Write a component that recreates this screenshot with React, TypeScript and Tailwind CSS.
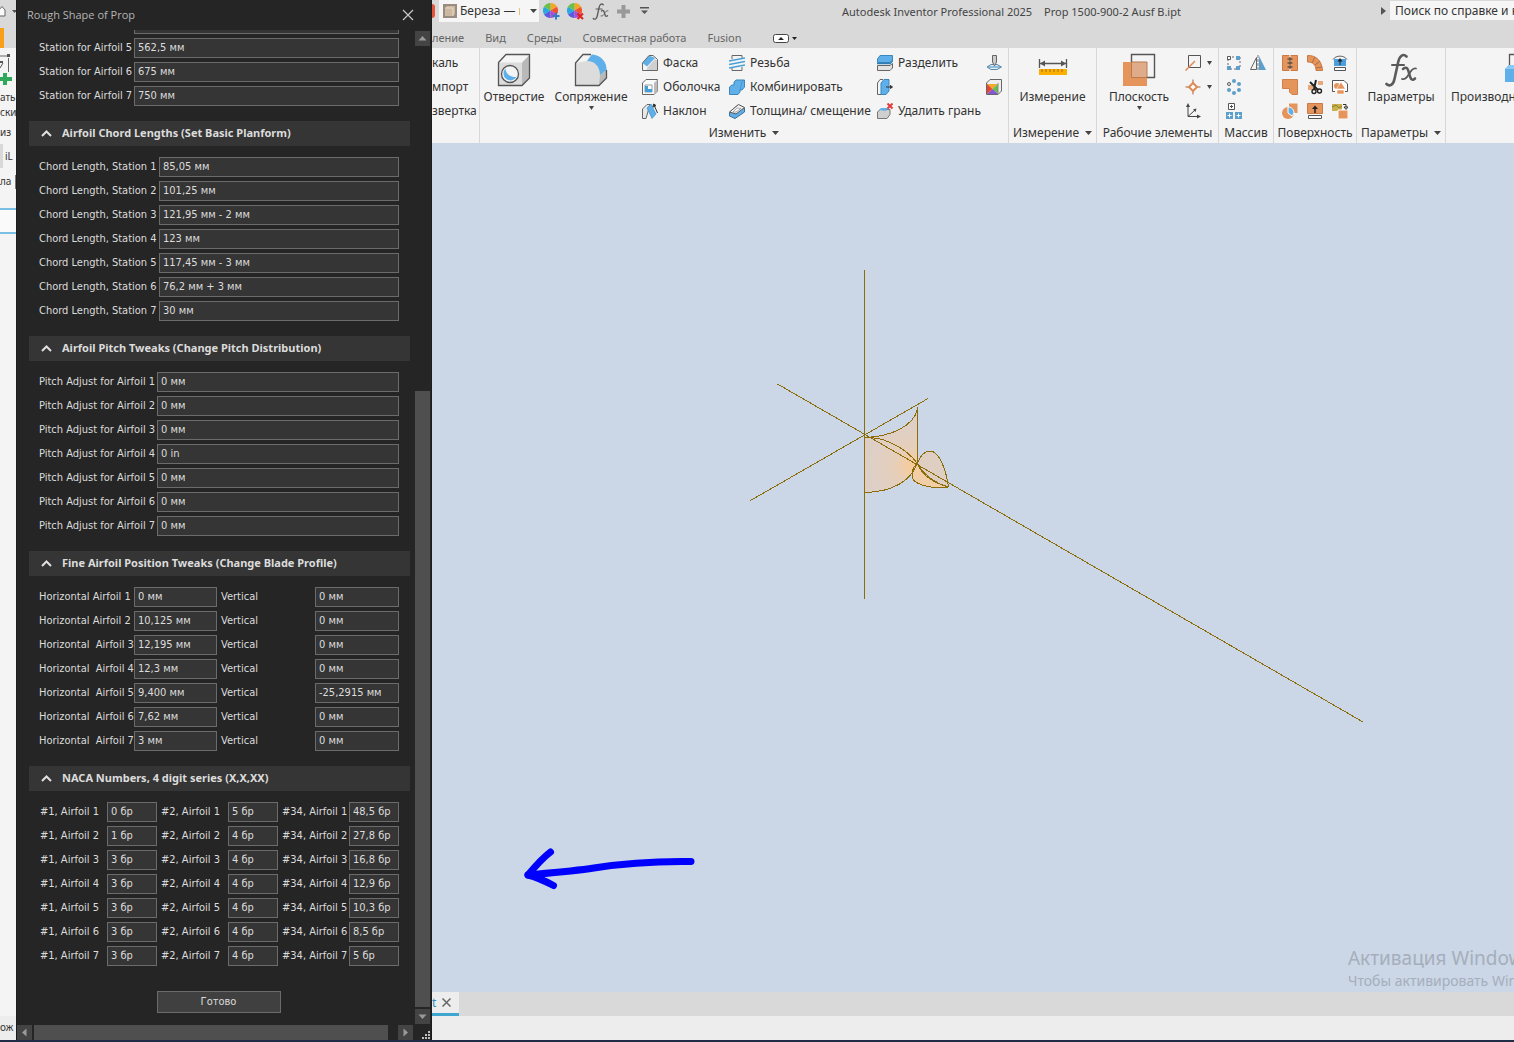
import React from 'react';

type Field = { label: string; value: string };

const stations: Field[] = [
    { label: '', value: '' },
    { label: 'Station for Airfoil 5', value: '562,5 мм' },
    { label: 'Station for Airfoil 6', value: '675 мм' },
    { label: 'Station for Airfoil 7', value: '750 мм' },
];

const chords: Field[] = ['85,05 мм', '101,25 мм', '121,95 мм - 2 мм', '123 мм', '117,45 мм - 3 мм', '76,2 мм + 3 мм', '30 мм'].map(
    (value, i) => ({ label: `Chord Length, Station ${i + 1}`, value })
);

const pitches: Field[] = ['0 мм', '0 мм', '0 мм', '0 in', '0 мм', '0 мм', '0 мм'].map((value, i) => ({
    label: `Pitch Adjust for Airfoil ${i + 1}`,
    value,
}));

const positions: Field[] = [
    ['Horizontal Airfoil 1', '0 мм', '0 мм'],
    ['Horizontal Airfoil 2', '10,125 мм', '0 мм'],
    ['Horizontal  Airfoil 3', '12,195 мм', '0 мм'],
    ['Horizontal  Airfoil 4', '12,3 мм', '0 мм'],
    ['Horizontal  Airfoil 5', '9,400 мм', '-25,2915 мм'],
    ['Horizontal  Airfoil 6', '7,62 мм', '0 мм'],
    ['Horizontal  Airfoil 7', '3 мм', '0 мм'],
].flatMap(([label, h, v]) => [
    { label, value: h },
    { label: 'Vertical', value: v },
]);

const naca: Field[] = [
    ['0 бр', '5 бр', '48,5 бр'],
    ['1 бр', '4 бр', '27,8 бр'],
    ['3 бр', '4 бр', '16,8 бр'],
    ['3 бр', '4 бр', '12,9 бр'],
    ['3 бр', '4 бр', '10,3 бр'],
    ['3 бр', '4 бр', '8,5 бр'],
    ['3 бр', '4 бр', '5 бр'],
].flatMap(([a, b, c], i) => [
    { label: `#1, Airfoil ${i + 1}`, value: a },
    { label: `#2, Airfoil ${i + 1}`, value: b },
    { label: `#34, Airfoil ${i + 1}`, value: c },
]);

function Fields({ name, items, cols }: { name: string; items: Field[]; cols: string }) {
    return (
        <div className={`grid items-center gap-y-1 pl-[10px] pr-[11px] ${cols}`}>
            {items.map((item, i) => (
                <React.Fragment key={i}>
                    <label htmlFor={`${name}-${i}`} className="whitespace-pre">
                        {item.label}
                    </label>
                    <input
                        id={`${name}-${i}`}
                        defaultValue={item.value}
                        className="h-5 w-full min-w-0 border border-[#6b6b6b] bg-[#353535] px-[3px] pb-px outline-none"
                    />
                </React.Fragment>
            ))}
        </div>
    );
}

function SectionHeader({ children }: { children: React.ReactNode }) {
    return (
        <button className="mt-[15px] mb-[11px] flex h-[25px] w-full items-center gap-[10px] bg-[#353535] pl-3 text-left font-['Noto_Sans',sans-serif] font-bold">
            <svg width="11" height="7" viewBox="0 0 11 7" fill="none" stroke="#e0e0e0" strokeWidth="2">
                <path d="M1 6 5.5 1.5 10 6" />
            </svg>
            {children}
        </button>
    );
}

function ScrollArrow({ label, path }: { label: string; path: string }) {
    return (
        <button aria-label={label} className="size-[15px] shrink-0 bg-[#444]">
            <svg width="15" height="15" viewBox="0 0 15 15" fill="#9a9a9a">
                <path d={path} />
            </svg>
        </button>
    );
}

function PropDialog() {
    return (
        <div className="flex w-[416px] shrink-0 flex-col border-x border-[#1b1b1b] bg-[#252525] font-['DejaVu_Sans_Condensed','Liberation_Sans',sans-serif] text-[11px] text-[#dcdcdc]">
            <div className="flex h-[30px] shrink-0 items-center justify-between pr-[17px] pl-[10px] text-[#b4b4b4]">
                <h1 className="font-['Open_Sans',sans-serif] text-[11px]">Rough Shape of Prop</h1>
                <button aria-label="Закрыть">
                    <svg width="12" height="12" viewBox="0 0 12 12" stroke="#c8c8c8" strokeWidth="1.2">
                        <path d="M1 1 11 11M11 1 1 11" />
                    </svg>
                </button>
            </div>
            <div className="flex min-h-0 flex-1">
                <div className="min-w-0 flex-1 overflow-hidden pr-[5px] pl-3">
                    <div className="-mt-4">
                        <Fields name="station" items={stations} cols="grid-cols-[95px_1fr]" />
                        <SectionHeader>Airfoil Chord Lengths (Set Basic Planform)</SectionHeader>
                        <Fields name="chord" items={chords} cols="grid-cols-[120px_1fr]" />
                        <SectionHeader>Airfoil Pitch Tweaks (Change Pitch Distribution)</SectionHeader>
                        <Fields name="pitch" items={pitches} cols="grid-cols-[118px_1fr]" />
                        <SectionHeader>Fine Airfoil Position Tweaks (Change Blade Profile)</SectionHeader>
                        <Fields name="position" items={positions} cols="grid-cols-[95px_83px_98px_84px] [&>label:nth-of-type(even)]:pl-1" />
                        <SectionHeader>NACA Numbers, 4 digit series (X,X,XX)</SectionHeader>
                        <Fields name="naca" items={naca} cols="grid-cols-[68px_50px_71px_50px_71px_50px] [&>label]:pl-1 [&>label:nth-of-type(3n+1)]:pl-px" />
                        <div className="flex justify-center pt-[25px] pr-0.5">
                            <button className="h-[22px] w-[124px] border border-[#6b6b6b] bg-[#404040]">Готово</button>
                        </div>
                    </div>
                </div>
                <div className="flex w-4 shrink-0 flex-col items-start pt-px">
                    <ScrollArrow label="Вверх" path="M3.5 9.5 7.5 5l4 4.5z" />
                    <div className="flex w-[15px] flex-1 flex-col justify-end py-0.5">
                        <div className="h-9/14 bg-[#4f4f4f]" />
                    </div>
                    <ScrollArrow label="Вниз" path="M3.5 5.5 7.5 10l4-4.5z" />
                </div>
            </div>
            <div className="flex h-4 shrink-0 items-end pt-px">
                <ScrollArrow label="Влево" path="M9.5 3.5 5 7.5l4.5 4z" />
                <div className="mx-0.5 h-[15px] flex-1 bg-[#4f4f4f]" />
                <div className="w-2" />
                <ScrollArrow label="Вправо" path="M5.5 3.5 10 7.5l-4.5 4z" />
                <svg className="ml-2" width="10" height="10" viewBox="0 0 10 10" fill="#bdbdbd">
                    <path d="M7 1h2v2H7zM4 4h2v2H4zM7 4h2v2H7zM1 7h2v2H1zM4 7h2v2H4zM7 7h2v2H7z" />
                </svg>
            </div>
        </div>
    );
}

// Slice of the Inventor window that shows to the left of the dialog
function LeftEdge() {
    return (
        <div className="flex w-4 shrink-0 flex-col overflow-hidden bg-[#f4f4f4] text-[#333]">
            <div className="h-7 bg-[#d9d9d9]">
                <svg width="16" height="28" viewBox="0 0 16 28">
                    <path d="M-2 11 2 6.5 5 10v6H-2" fill="#fafafa" stroke="#666" />
                    <path d="M12 10h5l-2.500 3z" fill="#555" />
                </svg>
            </div>
            <div className="flex h-5 bg-[#d9d9d9]">
                <div className="w-1 bg-[#f9a01b]" />
            </div>
            <svg className="shrink-0" width="16" height="40" viewBox="0 0 16 40">
                <path d="M0 8h7M8.500 10v14" stroke="#666" fill="none" />
                <path d="M7 6h3v3H7zM0 13h3v2H0z" fill="#555" />
                <path d="M0 20 3 15" stroke="#555" />
                <path d="M3 25h4v4h5v4H7v4H3v-4H-2v-4h5z" fill="#2fa85a" />
            </svg>
            <div className="flex h-14 flex-col text-[10px] leading-[15px]">
                <span className="mt-0.5">ать</span>
                <span>ски</span>
                <span className="mt-[5px]">из</span>
            </div>
            <div className="flex h-6 bg-[#f4f4f4] text-[10px] leading-6">
                <div className="w-[3px] shrink-0 bg-[#d9d9d9]" />
                <span className="ml-0.5">iL</span>
            </div>
            <div className="flex h-7 items-center justify-between text-[10px]">
                <span>ла</span>
                <span className="h-3.5 w-px shrink-0 bg-[#777]" />
            </div>
            <div className="mt-3 h-[26px] shrink-0 border-y-2 border-[#79bfe3] bg-[#fafafa]" />
            <div className="flex-1" />
            <div className="flex h-6 items-center bg-[#ededed] text-[10px]">ож</div>
        </div>
    );
}

function Svg({ size = 16, children }: { size?: number; children: React.ReactNode }) {
    return (
        <svg className="shrink-0" width={size} height={size} viewBox={`0 0 ${size} ${size}`} fill="none">
            {children}
        </svg>
    );
}

function Caret({ size = 7 }: { size?: number }) {
    return (
        <svg className="shrink-0" width={size} height="4" viewBox="0 0 8 4" preserveAspectRatio="none" fill="#444">
            <path d="M0 0h8L4 4z" />
        </svg>
    );
}

const HoleIcon = () => (
    <Svg size={34}>
        <path d="M1.500 9.500 9 1.500h24L25 9.500z" fill="#f5f5f5" />
        <path d="m25 9.500 8-8V25l-8 8z" fill="#b9b9b9" />
        <path d="M1.500 9.500H25V33H1.500z" fill="#dcdcdc" />
        <path d="M1.500 9.500 9 1.500h23.500V25L25 32.500H1.500z" stroke="#555" strokeWidth="1.300" />
        <circle cx="13" cy="21" r="8.500" fill="#f4f4f4" stroke="#555" strokeWidth="1.300" />
        <path d="M8.500 15.500a7 7 0 1 0 11 8.500C14 24.500 8.500 21 8.500 15.500z" fill="#5fb0ea" />
    </Svg>
);

const FilletIcon = () => (
    <Svg size={34}>
        <path d="M1.500 10 9 1.500h8C27 2 32 9 32.500 17v8L25 32.500H1.500z" fill="#dcdcdc" />
        <path d="M1.500 10 9 1.500h8L13 8z" fill="#f5f5f5" />
        <path d="m26 22 6.500-5v8L25 32.500z" fill="#b9b9b9" />
        <path d="M13 8 18 1.500C27 2 33 9 32.500 17L26 22C26 14 21 8 13 8z" fill="#5fb0ea" />
        <path d="M17 1.500H9L1.500 10v22.500H25l7.500-7.500v-8" stroke="#555" strokeWidth="1.300" />
    </Svg>
);

const ChamferIcon = () => (
    <Svg>
        <path d="M5 13 13 4l2.500 2v9.500H5z" fill="#d0d0d0" />
        <path d="M.5 8 7 .5l6 2.500-8 8.500z" fill="#5fb0ea" />
        <path d="M.5 15.500V8L7 .5h4l4.500 4v11z" stroke="#666" />
    </Svg>
);

const ShellIcon = () => (
    <Svg>
        <path d="M.5 4 4 .5h11.500V12L12 15.500H.5z" fill="#fafafa" stroke="#666" />
        <path d="m12 4 3.500-3.500V12L12 15.500z" fill="#bbb" />
        <path d="M3 6h7v7H3z" fill="#fff" stroke="#999" />
        <path d="M3 7h3v3h4v3H3z" fill="#3fa0dd" />
    </Svg>
);

const DraftIcon = () => (
    <Svg>
        <path d="M.5 15.500V6L5 1.500h3L4 15.500z" fill="#e8e8e8" stroke="#666" />
        <path d="M5 5 9 1l5 10-4 4.500z" fill="#5fb0ea" stroke="#3b87ba" strokeWidth=".6" />
        <path d="m15.500 10-3-7M11 4l.5-3L14 2.500z" stroke="#333" fill="#333" />
    </Svg>
);

const ThreadIcon = () => (
    <Svg>
        <path d="M3 4V.5h10V3M3 12v3.500h10V12" stroke="#666" />
        <path d="m0 6 16-3M0 9.500l16-3M0 13l16-3" stroke="#4a9fd8" strokeWidth="1.700" />
    </Svg>
);

const CombineIcon = () => (
    <Svg>
        <path d="M5 3 7 1h8.500v7L13 11h-2v2l-2 2.500H.5V8L3 6h2z" fill="#5fb0ea" stroke="#3b87ba" />
        <path d="m13 3 2-2M11 11l2-8" stroke="#3583b8" strokeWidth=".6" />
    </Svg>
);

const ThickenIcon = () => (
    <Svg>
        <path d="M.5 9.500 9 2l6.500 3v4L6 15.500.5 13z" fill="#5fb0ea" stroke="#3b6f94" />
        <path d="m.5 9 9-7.500 6 3L7 11z" fill="#f2f2f2" stroke="#555" />
        <path d="m4 9 4-4 4 .5L7 9z" fill="#fff" stroke="#888" strokeWidth=".7" />
    </Svg>
);

const SplitIcon = () => (
    <Svg>
        <path d="M.5 4 3 .5h12.500V5L13 7.500H.5z" fill="#5fb0ea" stroke="#3b87ba" />
        <path d="M0 8.500h13l3-3" stroke="#2f7db5" strokeWidth="1.500" />
        <path d="M.5 10.500h12.500l2.500-2V13L13 15.500H.5z" fill="#e3e3e3" stroke="#666" />
    </Svg>
);

const DirectIcon = () => (
    <Svg>
        <path d="M4 15.500H.5V4L3 .5h3" stroke="#666" />
        <path d="M4 4 7 .5h5V12l-3 3.500H4z" fill="#5fb0ea" stroke="#3b87ba" />
        <path d="M9 8h5M13.500 6.500 15.500 8l-2 1.500z" stroke="#333" fill="#333" />
    </Svg>
);

const DeleteFaceIcon = () => (
    <Svg>
        <path d="M.5 9 3 6.500h10v5L10 15.500H.5z" fill="#cfcfcf" stroke="#777" />
        <path d="M2 7 4 5h7l-2 3z" fill="#5fb0ea" />
        <path d="m10.500.5 5 5m0-5-5 5" stroke="#e23b3b" strokeWidth="2" />
    </Svg>
);

const StampIcon = () => (
    <Svg>
        <path d="M1 12 5 9.500h6L15.500 12 11 14.500H5z" fill="#e8f2fa" stroke="#5a86a8" />
        <path d="M6.500.5h4V7l-2 4-2-4z" fill="#ccc" stroke="#666" />
        <path d="M2 12h12" stroke="#3b87ba" />
    </Svg>
);

const ColorBoxIcon = () => (
    <Svg>
        <path d="M.5 4 4 .5h11.500V12L12 15.500H.5z" fill="#eee" stroke="#666" />
        <path d="M1 5h11L6.500 10z" fill="#f1a92e" />
        <path d="M12 5v10L6.500 10z" fill="#63bf46" />
        <path d="M1 15h11l-5.500-5z" fill="#8455d6" />
        <path d="M1 5v10l5.500-5z" fill="#e8452f" />
        <path d="M12 4v11.500" stroke="#888" />
    </Svg>
);

const RulerIcon = () => (
    <Svg size={30}>
        <path d="M1.500 4v9M28.500 4v9M2 8.500h26" stroke="#555" strokeWidth="1.300" />
        <path d="m2 8.500 5-3v6zM28 8.500l-5-3v6z" fill="#555" />
        <path d="M1 14h28v6H1z" fill="#fbb000" />
        <path d="M4 14v3m4-3v3m4-3v3m4-3v3m4-3v3m4-3v3" stroke="#a56d00" />
    </Svg>
);

const PlaneIcon = () => (
    <Svg size={34}>
        <path d="M9.500 1.500h23v23h-23z" fill="#f4f4f4" stroke="#555" strokeWidth="1.400" />
        <path d="M1 9h24v24H1z" fill="#e5945c" />
        <path d="M9.500 9H25v15.500H9.500z" fill="#e0ab89" stroke="#b87b50" />
    </Svg>
);

const AxisIcon = () => (
    <Svg>
        <path d="M3.500.5h12v12h-12z" stroke="#555" />
        <path d="M.5 15.500 10 6" stroke="#df8a55" strokeWidth="1.500" />
    </Svg>
);

const PointIcon = () => (
    <Svg>
        <path d="M8 .5v4M8 11.500v4M.5 8h4M11.500 8h4" stroke="#a2663d" />
        <path d="m8 4 4 4-4 4-4-4z" fill="#fff" stroke="#e08a52" strokeWidth="2" />
    </Svg>
);

const UcsIcon = () => (
    <Svg>
        <path d="M3 2v11.500h11M3 13.500 10 7" stroke="#444" />
        <path d="m3 0 2 4H1zM16 13.500l-4 2v-4zM11.500 5.500 10.500 9 8 6.500z" fill="#444" />
    </Svg>
);

const RectPatternIcon = () => (
    <Svg>
        <path d="M2 2h12v12H2z" stroke="#666" strokeDasharray="2 2" />
        <path d="M1.500 1.500h3v3h-3z" fill="#fff" stroke="#555" />
        <path d="M10 1h4v4h-4zM1 11h4v4H1zM10 11h4v4h-4z" fill="#5b9fca" />
    </Svg>
);

const CircPatternIcon = () => (
    <Svg>
        <circle cx="3" cy="5" r="1.500" stroke="#555" />
        <g fill="#5b9fca">
            <circle cx="8" cy="2" r="2" />
            <circle cx="13" cy="5" r="2" />
            <circle cx="13" cy="11" r="2" />
            <circle cx="8" cy="14" r="2" />
            <circle cx="3" cy="11" r="2" />
        </g>
    </Svg>
);

const SketchPatternIcon = () => (
    <Svg>
        <path d="M2.500.5h6v6h-6z" fill="#fff" stroke="#555" />
        <path d="M5.500 2v3M4 3.500h3" stroke="#555" />
        <path d="M0 9h7v7H0zM9 9h7v7H9z" fill="#5b9fca" />
        <path d="M3.500 10.500v4M1.500 12.500h4M12.500 10.500v4M10.500 12.500h4" stroke="#fff" />
    </Svg>
);

const MirrorIcon = () => (
    <Svg>
        <path d="M6.500 2.500v12h-6z" stroke="#666" />
        <path d="M9 1v14h7z" fill="#5b9fca" />
        <path d="M8 0v16" stroke="#777" strokeDasharray="3 1" />
    </Svg>
);

const surfaceIcons: React.ReactNode[] = [
    <Svg>
        <path d="M.5.5h15v15H.5z" fill="#e5945c" stroke="#c97a45" />
        <path d="M8 0v16" stroke="#fff" />
        <path d="M8 2v12M5.500 4h5M5.500 8h5M5.500 12h5" stroke="#333" />
    </Svg>,
    <Svg>
        <path d="M.5.5C9 0 15 6 15.500 15.500H9C9 10 6 7 .5 7z" fill="#e5945c" stroke="#c97a45" />
        <path d="M5 8 8 2M8 10l5-4M9 13l6-1" stroke="#b06a3b" />
    </Svg>,
    <Svg>
        <path d="M1 4.500C4 0 12 0 15 4.500" stroke="#666" />
        <path d="M2 4h12v7H2z" fill="#4a9fdc" />
        <path d="M8 10V5" stroke="#222" />
        <path d="M8 3 5.500 6.500h5z" fill="#222" />
        <path d="M2.500 12.500h11v3h-11z" fill="#fff" stroke="#555" />
    </Svg>,
    <Svg>
        <path d="M.5.5h15v15H10L7.500 13V9.500H.5z" fill="#e5945c" stroke="#d07f49" />
    </Svg>,
    <Svg>
        <path d="M1 6h5v5H1zM11 2h5v4h-5z" fill="#e9a77c" />
        <path d="m3 3 8 8M9 1 7 10" stroke="#222" strokeWidth="2" />
        <circle cx="7" cy="12.500" r="2" stroke="#222" strokeWidth="1.400" />
        <circle cx="12.500" cy="12" r="2" stroke="#222" strokeWidth="1.400" />
    </Svg>,
    <Svg>
        <path d="M3 12.500H.5v-11H12L15.500 5v7.500H13" fill="#fff" stroke="#555" />
        <circle cx="5" cy="7" r="3" fill="#e5945c" />
        <path d="m9 3 4.500 7H4.500zM5 11h7v4H5z" fill="#e5945c" stroke="#fff" strokeWidth=".6" />
    </Svg>,
    <Svg>
        <path d="M7 .5h8.500V10H7z" fill="#e5945c" />
        <circle cx="6" cy="10" r="6" fill="#e5945c" />
        <path d="M6 4c4 0 6 3 6 6l-2 3-4-3z" fill="#5fb0ea" stroke="#fff" />
    </Svg>,
    <Svg>
        <path d="M.5.500h15v10H.5z" fill="#e5945c" stroke="#c97a45" />
        <path d="M8 10V5" stroke="#222" strokeWidth="1.500" />
        <path d="M8 2.500 5 6h6z" fill="#222" />
        <path d="M1.500 12.500h13v3h-13z" fill="#fff" stroke="#555" />
    </Svg>,
    <Svg>
        <path d="M0 1h10v7H0z" fill="#c9b04a" />
        <path d="m0 4 4-2 3 3 3-2" stroke="#8d7c32" />
        <path d="M6 7h10v9H6z" fill="#e5945c" stroke="#fff" />
        <path d="M11 1.500h3V4M12 4h4l-2 2.500z" stroke="#333" />
    </Svg>,
];

const DeriveIcon = () => (
    <Svg size={34}>
        <path d="M5.500 14V1.500H30V20" stroke="#555" strokeWidth="1.300" />
        <path d="M1 16 5 12h22v17H1z" fill="#5fb0ea" />
        <path d="m1 16 4-4h22l-3 4z" fill="#8ccaf5" />
    </Svg>
);

function ColorWheel({ remove }: { remove?: boolean }) {
    return (
        <svg width="17" height="17" viewBox="0 0 17 17" fill="none">
            <path d="M7.500 7.500V0A7.500 7.500 0 0 1 14 3.700z" fill="#f6a623" />
            <path d="M7.500 7.500 14 3.700a7.500 7.500 0 0 1 0 7.500z" fill="#f0542d" />
            <path d="M7.500 7.500 14 11.200A7.500 7.500 0 0 1 7.500 15z" fill="#b44ad0" />
            <path d="M7.500 7.500V15A7.500 7.500 0 0 1 1 11.200z" fill="#5a5be0" />
            <path d="M7.500 7.500 1 11.200a7.500 7.500 0 0 1 0-7.500z" fill="#29a9e0" />
            <path d="M7.500 7.500 1 3.700A7.500 7.500 0 0 1 7.500 0z" fill="#6cc04a" />
            {remove ? (
                <path d="m10.500 10.500 5.500 5.500m0-5.500L10.500 16" stroke="#e02020" strokeWidth="2" />
            ) : (
                <path d="M13 9.500v7M9.500 13h7" stroke="#2f7dc4" strokeWidth="2" />
            )}
        </svg>
    );
}

function FxIcon({ size = 34 }: { size?: number }) {
    return (
        <svg width={size} height={size} viewBox="0 0 34 34" fill="none" stroke="#5a5a5a" strokeLinecap="round">
            <path d="M22.500 3.500C19 0 15.500 3 14.200 9L10.500 26c-1.200 6-5 8-8 5" strokeWidth="2.600" />
            <path d="M8 12h12" strokeWidth="2" />
            <path d="M19 16c4-3 5 0 6 4s2 9 6 5.500" strokeWidth="2.600" />
            <path d="M32 15.500c-3-1-5 2-7 5.500s-4 6-7 5" strokeWidth="1.800" />
        </svg>
    );
}

function Group({ width, label, caret, children }: { width: string; label: string; caret?: boolean; children?: React.ReactNode }) {
    return (
        <section className={`flex shrink-0 flex-col border-r border-[#d8d8d8] ${width}`}>
            <div className="flex h-[75px] pt-[3px]">{children}</div>
            <div className="flex h-5 items-center justify-center gap-1.5 whitespace-nowrap">
                {label}
                {caret && <Caret />}
            </div>
        </section>
    );
}

function BigButton({ icon, label, caret, width }: { icon: React.ReactNode; label: string; caret?: boolean; width: string }) {
    return (
        <button className={`flex flex-col items-center self-start whitespace-nowrap ${width}`}>
            <span className="flex h-[37px] items-center">{icon}</span>
            <span className="leading-[18px]">{label}</span>
            {caret && <Caret size={5} />}
        </button>
    );
}

function ToolColumn({ width, tools }: { width: string; tools: [React.ReactNode, string, string?][] }) {
    return (
        <div className={`flex shrink-0 flex-col ${width}`}>
            {tools.map(([icon, label, hint], i) => (
                <button key={i} aria-label={label || hint} className="flex h-6 items-center gap-[5px] whitespace-nowrap">
                    {icon}
                    {label}
                </button>
            ))}
        </div>
    );
}

function Ribbon() {
    return (
        <div className="flex h-[95px] shrink-0 overflow-hidden bg-[#f4f4f4] text-[#333]">
            <Group width="w-12" label="">
                <div className="flex w-full flex-col items-start">
                    {['каль', 'мпорт', 'звертка'].map((t) => (
                        <button key={t} className="h-6">
                            {t}
                        </button>
                    ))}
                </div>
            </Group>
            <Group width="w-[529px]" label="Изменить" caret>
                <BigButton width="w-[68px]" icon={<HoleIcon />} label="Отверстие" />
                <BigButton width="w-[86px]" icon={<FilletIcon />} label="Сопряжение" caret />
                <div className="w-2" />
                <ToolColumn width="w-[87px]" tools={[[<ChamferIcon />, 'Фаска'], [<ShellIcon />, 'Оболочка'], [<DraftIcon />, 'Наклон']]} />
                <ToolColumn width="w-[148px]" tools={[[<ThreadIcon />, 'Резьба'], [<CombineIcon />, 'Комбинировать'], [<ThickenIcon />, 'Толщина/ смещение']]} />
                <ToolColumn width="w-[109px]" tools={[[<SplitIcon />, 'Разделить'], [<DirectIcon />, '', 'Прямое'], [<DeleteFaceIcon />, 'Удалить грань']]} />
                <ToolColumn width="w-4" tools={[[<StampIcon />, '', 'Маркировка'], [<ColorBoxIcon />, '', 'Готовая деталь']]} />
            </Group>
            <Group width="w-[88px]" label="Измерение" caret>
                <BigButton width="w-full" icon={<RulerIcon />} label="Измерение" />
            </Group>
            <Group width="w-[122px]" label="Рабочие элементы">
                <BigButton width="w-[84px]" icon={<PlaneIcon />} label="Плоскость" caret />
                <div className="flex flex-col pl-1">
                    {[<AxisIcon />, <PointIcon />, <UcsIcon />].map((icon, i) => (
                        <button key={i} aria-label={['Ось', 'Точка', 'ПСК'][i]} className="flex h-6 items-center gap-1.5">
                            {icon}
                            {i < 2 && <Caret size={5} />}
                        </button>
                    ))}
                </div>
            </Group>
            <Group width="w-[55px]" label="Массив">
                <div className="grid h-[72px] grid-cols-2 place-items-center gap-x-2 pl-[7px]">
                    <button aria-label="Прямоугольный"><RectPatternIcon /></button>
                    <button aria-label="Зеркально"><MirrorIcon /></button>
                    <button aria-label="Круговой"><CircPatternIcon /></button>
                    <span />
                    <button aria-label="По эскизу"><SketchPatternIcon /></button>
                </div>
            </Group>
            <Group width="w-[83px]" label="Поверхность">
                <div className="grid h-[72px] grid-cols-3 place-items-center gap-x-[9px] pl-2">
                    {surfaceIcons.map((icon, i) => (
                        <button key={i} aria-label={`Поверхность ${i + 1}`}>
                            {icon}
                        </button>
                    ))}
                </div>
            </Group>
            <Group width="w-[89px]" label="Параметры" caret>
                <BigButton width="w-full" icon={<FxIcon />} label="Параметры" />
            </Group>
            <div className="flex pt-[3px] pl-[5px]">
                <button className="flex flex-col items-start self-start whitespace-nowrap">
                    <span className="flex h-[37px] items-center pl-[53px]">
                        <DeriveIcon />
                    </span>
                    <span className="leading-[18px]">Производные</span>
                </button>
            </div>
        </div>
    );
}

function TopBar() {
    return (
        <header className="shrink-0 bg-[#d9d9d9] text-[#444]">
            <div className="flex h-6 items-start">
                <div className="flex h-[22px] w-[410px] shrink-0 items-center">
                    <div className="h-3.5 w-[3px] rounded-r-full bg-[#e2553c]" />
                    <div className="ml-1 flex h-[22px] w-[100px] items-center bg-[#f6f6f6] pl-1">
                        <svg className="shrink-0" width="14" height="14" viewBox="0 0 14 14">
                            <path d="M0 0h14v14H0z" fill="#9a8d80" />
                            <path d="m2 4 2-2h8v8l-2 2H2z" fill="#cdb9a2" />
                            <path d="M2 4h8v8" fill="none" stroke="#e5d8c8" />
                        </svg>
                        <select aria-label="Материал" className="ml-[3px] w-[60px] appearance-none overflow-hidden bg-transparent text-[#333]">
                            <option>Береза — натуральная</option>
                        </select>
                        <span className="ml-2.5">
                            <Caret />
                        </span>
                    </div>
                    <div className="flex items-center pl-1">
                        <button aria-label="Настроить"><ColorWheel /></button>
                        <button aria-label="Очистить" className="ml-[7px]"><ColorWheel remove /></button>
                        <button aria-label="Параметры" className="ml-2"><FxIcon size={17} /></button>
                        <button aria-label="Добавить" className="ml-2">
                            <svg width="13" height="13" viewBox="0 0 13 13" fill="#999">
                                <path d="M4.500 0h4v4.500H13v4H8.500V13h-4V8.500H0v-4h4.500z" />
                            </svg>
                        </button>
                        <button aria-label="Ещё" className="ml-2.5">
                            <svg width="9" height="8" viewBox="0 0 9 8" fill="#555">
                                <path d="M0 0h9v1.500H0zM1 3.500h7L4.500 7z" />
                            </svg>
                        </button>
                    </div>
                </div>
                <div className="flex min-w-0 flex-1 gap-3 text-[11px] leading-6 whitespace-nowrap">
                    <span>Autodesk Inventor Professional 2025</span>
                    <span>Prop 1500-900-2 Ausf B.ipt</span>
                </div>
                <div className="flex w-[133px] shrink-0 items-center gap-1 pt-px">
                    <svg width="5" height="8" viewBox="0 0 5 8" fill="#555">
                        <path d="M0 0v8l5-4z" />
                    </svg>
                    <input
                        aria-label="Поиск"
                        defaultValue="Поиск по справке и командам"
                        className="h-[19px] min-w-0 flex-1 bg-[#f6f6f6] pl-[5px] text-[#333] outline-none"
                    />
                </div>
            </div>
            <nav className="flex h-6 items-center gap-[21px] pt-1 text-[11px] whitespace-nowrap text-[#666]">
                {['ление', 'Вид', 'Среды', 'Совместная работа', 'Fusion'].map((t) => (
                    <a key={t} href="#">
                        {t}
                    </a>
                ))}
                <button aria-label="Свернуть ленту" className="ml-2.5">
                    <svg width="25" height="9" viewBox="0 0 25 9">
                        <rect x=".5" y=".5" width="15" height="8" rx="2" fill="#fff" stroke="#444" />
                        <path d="M5 6h6L8 3zM19 3h5l-2.500 3z" fill="#222" />
                    </svg>
                </button>
            </nav>
        </header>
    );
}

function Viewport() {
    return (
        <main className="relative min-h-0 flex-1 overflow-hidden bg-[#cbd6e6]">
            <svg className="block" width="1082" height="849" viewBox="432 143 1082 849" fill="none">
                <defs>
                    <radialGradient id="glow" gradientUnits="userSpaceOnUse" cx="912" cy="466" r="44">
                        <stop offset="0" stopColor="#f8cb98" />
                        <stop offset=".4" stopColor="#e6cfba" />
                        <stop offset="1" stopColor="#ddcfc8" />
                    </radialGradient>
                </defs>
                <path d="M865 437C893 436 914 425 917.500 409V463C912 481 893 492 865 492.500z" fill="url(#glow)" />
                <path d="M917 463C921 452 926 451 930 451c9 0 16 18 18.500 36C932 489 911 485 912 475c0-5 2-9 5-12z" fill="#dfcfc2" />
                <path d="M917 465c7 12 17 19 31 22-17 1-34 0-35-10 0-5 2-9 4-12z" fill="#f8cd98" opacity=".7" />
                <g stroke="#8b6c08" shapeRendering="crispEdges">
                    <path d="M864.500 270v329M777.500 384 1363 722M750.500 500.500 928 398.500" />
                    <path d="M917.500 407v56M865 437.500C893 436.500 914 425 917.500 409M865 492.500c28-.5 46-12 52.500-29.500" />
                    <path d="M870 437.500c18 1 37 12 47.500 26 6 11 18 20 31 23.500" />
                    <path d="M917.500 463c4-10 8-12 12.500-12 9 0 16 18 18.500 36C932 489 911 485 912 475c0-5 2-9 5.500-12z" />
                    <path d="M917.500 464c6 14 18 19 31 23" />
                </g>
                <g stroke="#00f" strokeWidth="7" strokeLinecap="round" strokeLinejoin="round">
                    <path d="M691 861.500c-35-.5-63 1-97 6.500-20 3-44 5-66 7" />
                    <path d="M550.500 852c-8 6-15 14-22.500 23 8 2 17 6 25.500 10.500" />
                </g>
            </svg>
            {/* Windows activation watermark */}
            <div className="absolute bottom-0 left-[916px] whitespace-nowrap text-[#a5aebb]">
                <p className="text-[19px] leading-6">Активация Windows</p>
                <p className="text-sm leading-[22px]">Чтобы активировать Windows, перейдите в раздел</p>
            </div>
        </main>
    );
}

export default function App() {
    return (
        <div className="flex h-screen flex-col overflow-hidden font-['Noto_Sans',sans-serif] text-xs">
            <div className="flex min-h-0 flex-1">
                <LeftEdge />
                <PropDialog />
                <div className="flex min-w-0 flex-1 flex-col">
                    <TopBar />
                    <Ribbon />
                    <Viewport />
                    <div className="flex h-6 shrink-0 bg-[#d9d9d9]">
                        <div className="flex w-[27px] items-center gap-1.5 border-b-3 border-[#3fa6d0] bg-[#ededed] text-[#2b8fbf]">
                            <span>t</span>
                            <button aria-label="Закрыть вкладку">
                                <svg width="9" height="9" viewBox="0 0 9 9" stroke="#666" strokeWidth="1.500">
                                    <path d="m.5.5 8 8m0-8-8 8" />
                                </svg>
                            </button>
                        </div>
                    </div>
                    <footer className="h-6 shrink-0 bg-[#ededed]" />
                </div>
            </div>
            <div className="h-0.5 shrink-0 bg-[#1e2d45]" />
        </div>
    );
}
